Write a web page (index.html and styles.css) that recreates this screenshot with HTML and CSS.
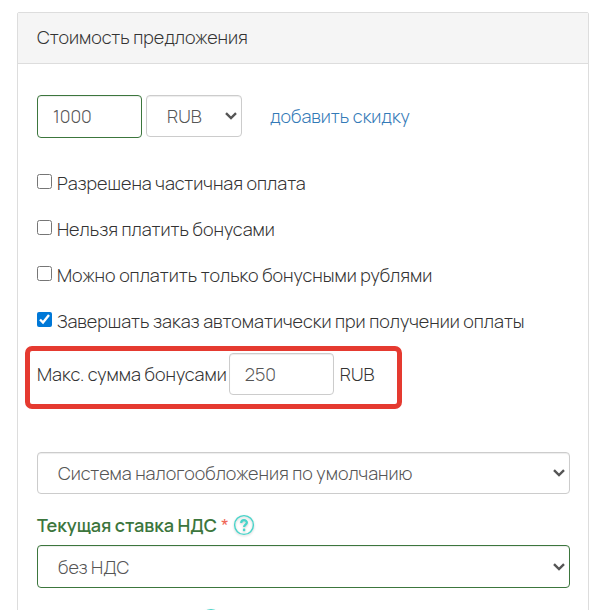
FILE: index.html
```html
<!DOCTYPE html>
<html lang="ru">
<head>
<meta charset="utf-8">
<meta name="viewport" content="width=device-width, initial-scale=1">
<title>Стоимость предложения</title>
<link rel="stylesheet" href="styles.css">
</head>
<body>
<form class="panel">
  <h1 class="panel-heading">Стоимость предложения</h1>
  <div class="panel-body">
    <div class="price-row">
      <input class="control control-short valid" type="text" value="1000" aria-label="Стоимость">
      <span class="select-wrap currency">
        <select class="control" aria-label="Валюта"><option>RUB</option></select>
        <svg class="chevron" viewBox="0 0 12 8" aria-hidden="true"><path d="M1 1.2 6 6l5-4.8"/></svg>
      </span>
      <a class="discount" href="#">добавить скидку</a>
    </div>

    <div class="checks">
      <label class="check"><input type="checkbox"><span>Разрешена частичная оплата</span></label>
      <label class="check"><input type="checkbox"><span>Нельзя платить бонусами</span></label>
      <label class="check"><input type="checkbox"><span>Можно оплатить только бонусными рублями</span></label>
      <label class="check"><input type="checkbox" checked><span>Завершать заказ автоматически при получении оплаты</span></label>
    </div>

    <div class="bonus">
      <label for="bonus">Макс. сумма бонусами</label>
      <input class="control control-short" id="bonus" type="text" value="250">
      <span class="unit">RUB</span>
    </div>

    <div class="select-wrap">
      <select class="control" aria-label="Система налогообложения"><option>Система налогообложения по умолчанию</option></select>
      <svg class="chevron" viewBox="0 0 12 8" aria-hidden="true"><path d="M1 1.2 6 6l5-4.8"/></svg>
    </div>

    <div class="field-label">
      <label for="vat">Текущая ставка НДС</label>
      <span class="required">*</span>
      <svg class="help" viewBox="0 0 22 22" aria-hidden="true"><circle cx="11" cy="11" r="9.4"/><path d="M8.2 8.9c0-3.6 5.7-3.5 5.7-.3 0 2.1-2.8 2.1-2.8 4.5"/><circle class="dot" cx="11.1" cy="15.9" r="1.3"/></svg>
    </div>
    <div class="select-wrap">
      <select class="control valid" id="vat"><option>без НДС</option></select>
      <svg class="chevron" viewBox="0 0 12 8" aria-hidden="true"><path d="M1 1.2 6 6l5-4.8"/></svg>
    </div>
    <div class="next-field">
      <svg class="help" viewBox="0 0 22 22" aria-hidden="true"><circle cx="11" cy="11" r="9.4"/><path d="M8.2 8.9c0-3.6 5.7-3.5 5.7-.3 0 2.1-2.8 2.1-2.8 4.5"/><circle class="dot" cx="11.1" cy="15.9" r="1.3"/></svg>
    </div>
  </div>
</form>
</body>
</html>
```

FILE: styles.css
```css
* {
  box-sizing: border-box;
}

html {
  height: 100%;
  overflow: hidden;
}

body {
  margin: 0;
  padding: 12px 23px 0 17px;
  background: #fff;
  color: #333;
  font: 300 18px/26px Manrope, Inter, "Liberation Sans", sans-serif;
}

.panel {
  border: 1px solid #ddd;
  border-radius: 2px;
}

.panel-heading {
  margin: 0;
  padding: 11px 19px 13px;
  border-bottom: 1px solid #ddd;
  background: #f5f5f5;
  font-size: 18px;
  font-weight: 300;
}

.panel-body {
  padding: 31px 18px 0 19px;
}

.price-row {
  display: flex;
  align-items: flex-start;
  gap: 4px;
}

.control {
  display: block;
  width: 100%;
  height: 42px;
  padding: 0 32px 0 20px;
  border: 1px solid #ccc;
  border-radius: 4px;
  background: #fff;
  box-shadow: inset 0 1px 1px rgba(0, 0, 0, 0.075);
  color: #555;
  font: inherit;
  appearance: none;
}

.control-short {
  width: 105px;
  padding: 0 15px;
}

.valid {
  height: 43px;
  border-color: #3c763d;
}

.price-row .valid {
  padding-bottom: 1px;
}

.select-wrap {
  display: block;
  position: relative;
}

.currency {
  width: 96px;
}

.chevron {
  position: absolute;
  top: 50%;
  right: 5px;
  width: 12px;
  height: 8px;
  margin-top: -4px;
  fill: none;
  stroke: #555;
  stroke-width: 2.4;
  pointer-events: none;
}

.discount {
  margin-left: 24px;
  line-height: 42px;
  color: #337ab7;
  text-decoration: none;
}

.checks {
  display: grid;
  gap: 20px;
  margin-top: 32px;
}

.check {
  display: flex;
  align-items: flex-start;
  gap: 5px;
}

.check input {
  flex: none;
  width: 15px;
  height: 15px;
  margin: 4px 0 0;
  accent-color: #0078d7;
}

.bonus {
  display: flex;
  align-items: center;
  gap: 2px;
  width: 377px;
  max-width: 100%;
  margin: 12px 0 43px -12px;
  padding: 2px 7px 9px;
  border: 5px solid #e53a30;
  border-radius: 7px;
}

.unit {
  margin-left: 4px;
}

.field-label {
  display: flex;
  align-items: center;
  gap: 4px;
  margin: 18px 0 7px;
  color: #3c763d;
  font-weight: 600;
}

.required {
  color: #f0695a;
  font-weight: 400;
}

.help {
  flex: none;
  width: 22px;
  height: 22px;
  fill: none;
  stroke: #48d5ca;
  stroke-width: 1.4;
  filter: drop-shadow(0 1px 1px rgba(0, 0, 0, 0.2));
}

.help path {
  stroke-width: 2.2;
}

.help .dot {
  fill: #48d5ca;
  stroke: none;
}

.next-field {
  margin: 20px 0 0 163px;
}
```
